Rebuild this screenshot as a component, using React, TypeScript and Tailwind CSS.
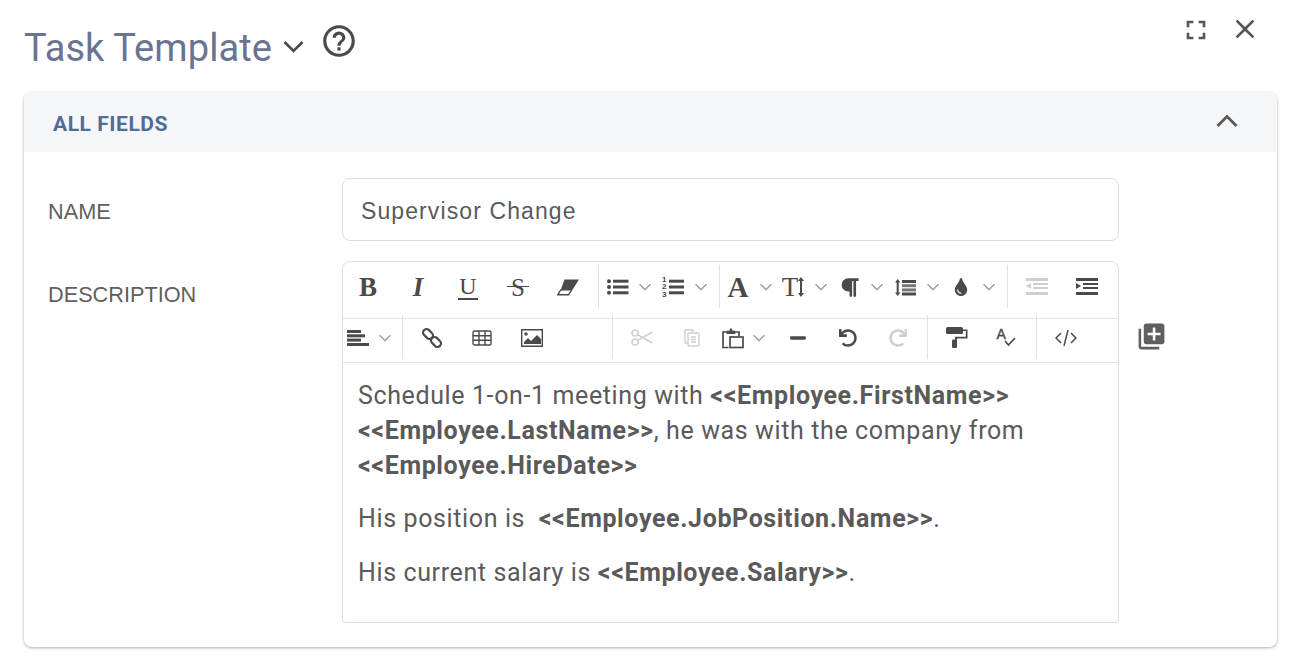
import type { ReactNode } from 'react'
import { FaUndo, FaRedo, FaTint, FaParagraph, FaMinus } from 'react-icons/fa'
import { MdClose, MdFullscreen, MdHelpOutline, MdLibraryAdd } from 'react-icons/md'

const Chevron = () => (
  <svg width="14" height="8" viewBox="0 0 14 8" fill="none" stroke="#a3a3a3" strokeWidth="1.5">
    <path d="M1.5 1.2 7 6.6l5.5-5.4" />
  </svg>
)

const Btn = ({ children, off }: { children: ReactNode; off?: boolean }) => (
  <div className={`flex h-full w-[50px] shrink-0 items-center justify-center ${off ? 'text-[#cfcfcf]' : 'text-[#4a4a4a]'}`}>
    {children}
  </div>
)

const Drop = ({ children, narrow }: { children: ReactNode; narrow?: boolean }) => (
  <div className={`flex h-full shrink-0 items-center text-[#4a4a4a] ${narrow ? 'w-[55px]' : 'w-[56px]'}`}>
    <div className="flex w-[28px] justify-center">{children}</div>
    <div className="ml-[7px]">
      <Chevron />
    </div>
  </div>
)

const Sep = ({ tall, first }: { tall?: boolean; first?: boolean }) => (
  <div
    className={`mr-[4px] w-px shrink-0 bg-[#e0e0e0] ${first ? 'ml-[5px]' : 'ml-[4px]'} ${tall ? '-mt-[4px] h-[44px]' : 'mt-[3px] h-[43px]'}`}
  />
)

const Glyph = ({ children, className }: { children: ReactNode; className?: string }) => (
  <span className={`font-['Liberation_Serif',serif] leading-none ${className ?? ''}`}>{children}</span>
)

const Eraser = () => (
  <svg width="22" height="17" viewBox="0 0 22 17" fill="currentColor">
    <path d="M7.5 0.5H22L15 11.5H3.5z" />
    <path d="M4 10.5 0.8 15.8h10.7l3.2-5" fill="none" stroke="currentColor" strokeWidth="1.4" />
  </svg>
)

const ListUl = () => (
  <svg className="ml-[2px]" width="22" height="18" viewBox="0 0 22 18" fill="currentColor">
    <circle cx="2" cy="3.2" r="2" />
    <circle cx="2" cy="9" r="2" />
    <circle cx="2" cy="14.8" r="2" />
    <rect x="6" y="1.7" width="15.5" height="3" />
    <rect x="6" y="7.5" width="15.5" height="3" />
    <rect x="6" y="13.3" width="15.5" height="3" />
  </svg>
)

const ListOl = () => (
  <div className="relative h-[18px] w-[22px]">
    <svg className="absolute inset-0" width="22" height="18" viewBox="0 0 22 18" fill="currentColor">
      <rect x="7" y="1.7" width="15" height="3" />
      <rect x="7" y="7.5" width="15" height="3" />
      <rect x="7" y="13.3" width="15" height="3" />
    </svg>
    <div className="absolute left-0 top-[-2px] w-[6px] font-['Liberation_Sans',sans-serif] text-[8px] font-bold leading-[7.4px]">
      1<br />2<br />3
    </div>
  </div>
)

const LineHeight = () => (
  <svg width="21" height="17" viewBox="0 0 21 17" fill="currentColor">
    <path d="M2.7 0l2.7 3.5H3.7v10h1.7L2.7 17 0 13.500h1.700v-10H0z" />
    <rect x="7" y="1" width="14" height="3" />
    <rect x="7" y="5.200" width="14" height="3" opacity=".75" />
    <rect x="7" y="9.400" width="14" height="3" opacity=".75" />
    <rect x="7" y="13.500" width="14" height="3" />
  </svg>
)

const Outdent = () => (
  <svg width="22" height="18" viewBox="0 0 22 18" fill="currentColor">
    <rect x="0" y="0" width="22" height="3" />
    <rect x="7" y="5" width="15" height="2" />
    <rect x="7" y="9" width="15" height="2" />
    <path d="M5 5v6L0 8z" />
    <rect x="0" y="14" width="22" height="3" />
  </svg>
)

const Indent = () => (
  <svg width="22" height="18" viewBox="0 0 22 18" fill="currentColor">
    <rect x="0" y="0" width="22" height="3" />
    <rect x="7" y="5" width="15" height="2" />
    <rect x="7" y="9" width="15" height="2" />
    <path d="M0 5v6l5-3z" />
    <rect x="0" y="14" width="22" height="3" />
  </svg>
)

const AlignLeft = () => (
  <svg className="ml-[2px]" width="22" height="18" viewBox="0 0 22 18" fill="currentColor">
    <rect x="0" y="1" width="14" height="3" />
    <rect x="0" y="5.300" width="18" height="3" />
    <rect x="0" y="9.600" width="14" height="3" />
    <rect x="0" y="14" width="22" height="3" />
  </svg>
)

const LinkIcon = () => (
  <svg width="20" height="20" viewBox="0 0 20 20" fill="none" stroke="currentColor" strokeWidth="2.2">
    <rect x="0.500" y="2.500" width="11" height="7" rx="3.500" transform="rotate(45 6 6)" />
    <rect x="8.500" y="10.500" width="11" height="7" rx="3.500" transform="rotate(45 14 14)" />
  </svg>
)

const TableIcon = () => (
  <svg width="20" height="16" viewBox="0 0 20 16" fill="none" stroke="currentColor" strokeWidth="1.4">
    <rect x="1" y="1" width="18" height="14" rx="1.500" />
    <path d="M1 5.700h18M1 10.300h18M7 1v14M13 1v14" />
  </svg>
)

const ImageIcon = () => (
  <svg width="22" height="18" viewBox="0 0 22 18" fill="currentColor">
    <path d="M0 0h22v18H0zM1.400 1.400v15.200h19.200V1.400z" fillRule="evenodd" />
    <circle cx="5" cy="5" r="1.800" />
    <path d="M3 15v-2l4-4 3 3 6-6 4 4v5z" />
  </svg>
)

const Scissors = () => (
  <svg width="22" height="17" viewBox="0 0 22 17" fill="none" stroke="currentColor" strokeWidth="1.500">
    <circle cx="4" cy="4" r="3" />
    <circle cx="4" cy="13" r="3" />
    <path d="M6.500 5.700 21.500 14M6.500 11.300 21.500 3" />
  </svg>
)

const CopyIcon = () => (
  <svg width="16" height="18" viewBox="0 0 16 18" fill="none" stroke="currentColor" strokeWidth="1.400">
    <path d="M3 14H1V1h8v2" />
    <rect x="4" y="4" width="11" height="13" rx="1" />
    <path d="M7 8h5M7 10.500h5M7 13h5" />
  </svg>
)

const Paste = () => (
  <svg className="ml-[3px]" width="22" height="22" viewBox="0 0 22 22" fill="none" stroke="currentColor" strokeWidth="1.700">
    <path d="M6.500 20.500H1V5h4M13 5h4v4" />
    <path d="M5 6.500V4.200h2.500L9 1.500l1.500 2.700H13v2.300z" fill="currentColor" strokeWidth="1" />
    <rect x="8" y="10" width="13" height="10.500" />
  </svg>
)

const PaintRoller = () => (
  <svg width="22" height="21" viewBox="0 0 22 21" fill="currentColor">
    <rect x="0" y="0" width="17" height="7" rx="1.500" />
    <path d="M17 2.500h4.500v9H11v2H9v-3.700h10.800V4H17z" />
    <rect x="6" y="12.500" width="5" height="8.500" rx="1" />
  </svg>
)

const SpellCheck = () => (
  <div className="relative ml-[-2px] h-[20px] w-[19px]">
    <span className="absolute left-0 top-[-3px] font-['Liberation_Sans',sans-serif] text-[14px] leading-[18px] [-webkit-text-stroke:0.4px_currentColor]">A</span>
    <svg className="absolute inset-0" width="19" height="20" viewBox="0 0 19 20" fill="none" stroke="currentColor" strokeWidth="1.700">
      <path d="M8 13l3.500 4 6.500-7" />
    </svg>
  </div>
)

const Toolbar = () => (
  <div className="text-[#4a4a4a]">
    <div className="flex h-[57px] border-b border-[#e3e3e3] pb-[6px]">
      <Btn><Glyph className="text-[27px] font-bold">B</Glyph></Btn>
      <Btn><Glyph className="text-[27px] font-bold italic">I</Glyph></Btn>
      <Btn>
        <span className="border-b-2 border-[#4a4a4a] px-px"><Glyph className="block text-[24px]">U</Glyph></span>
      </Btn>
      <Btn>
        <span className="relative">
          <Glyph className="block text-[25px]">S</Glyph>
          <span className="absolute -left-[4px] -right-[4px] top-[11px] h-[1.500px] bg-[#4a4a4a]" />
        </span>
      </Btn>
      <Btn><Eraser /></Btn>
      <Sep first />
      <Drop><ListUl /></Drop>
      <Drop><ListOl /></Drop>
      <Sep />
      <Drop narrow><Glyph className="text-[29px] font-bold">A</Glyph></Drop>
      <Drop>
        <span className="flex items-center">
          <Glyph className="text-[27px]">T</Glyph>
          <svg width="6" height="20" viewBox="0 0 6 20" fill="currentColor"><path d="M3 0l3 4H4v12h2l-3 4-3-4h2V4H0z" /></svg>
        </span>
      </Drop>
      <Drop><FaParagraph size={21} /></Drop>
      <Drop><LineHeight /></Drop>
      <Drop><FaTint size={18} /></Drop>
      <Sep />
      <Btn off><Outdent /></Btn>
      <Btn><Indent /></Btn>
    </div>
    <div className="flex h-[44px] border-b border-[#e3e3e3] pb-[6px]">
      <Drop narrow><AlignLeft /></Drop>
      <Sep tall />
      <Btn><LinkIcon /></Btn>
      <Btn><TableIcon /></Btn>
      <Btn><ImageIcon /></Btn>
      <div className="w-[51px] shrink-0" />
      <Sep tall />
      <Btn off><Scissors /></Btn>
      <Btn off><CopyIcon /></Btn>
      <Drop><Paste /></Drop>
      <Btn><FaMinus size={18} /></Btn>
      <Btn><FaUndo size={18} /></Btn>
      <Btn off><FaRedo size={18} /></Btn>
      <Sep tall />
      <Btn><PaintRoller /></Btn>
      <Btn><SpellCheck /></Btn>
      <Sep tall />
      <Btn>
        <svg width="22" height="16" viewBox="0 0 22 16" fill="none" stroke="currentColor" strokeWidth="1.500">
          <path d="M6 3 1 8l5 5M16 3l5 5-5 5M13 0 9 16" />
        </svg>
      </Btn>
    </div>
  </div>
)

const Tag = ({ children }: { children: ReactNode }) => <strong className="font-bold">{children}</strong>

export default function App() {
  return (
    <div className="h-[671px] w-[1300px] overflow-hidden bg-white font-['Roboto',sans-serif]">
      <div className="flex h-[92px] items-start pl-[24px]">
        <h1 className="mt-[25px] text-[38px] font-normal leading-[46px] tracking-[0.08px] text-[#6a7492]">Task Template</h1>
        <svg className="ml-[11px] mt-[40px] text-[#4a4a4a]" width="21" height="13" viewBox="0 0 21 13" fill="none" stroke="currentColor" strokeWidth="2.600">
          <path d="M1.500 2 10.500 11l9-9" />
        </svg>
        <MdHelpOutline size={38} className="ml-[16px] mt-[22px] text-[#4a4a4a]" />
        <MdFullscreen size={32} className="ml-auto mt-[14px] text-[#555]" />
        <MdClose size={32} className="ml-[17px] mr-[39px] mt-[13px] text-[#555]" />
      </div>
      <div className="ml-[24px] h-[555px] w-[1253px] overflow-hidden rounded-[8px] bg-white shadow-[0_1px_3px_rgba(0,0,0,0.32)]">
        <div className="flex h-[60px] items-center justify-between bg-[#f5f6f8] pl-[29px] pr-[39px]">
          <span className="mt-[5px] text-[21px] font-bold leading-none tracking-[0.55px] text-[#4f6d96]">ALL FIELDS</span>
          <svg className="-mt-[2px] text-[#5a5a5a]" width="22" height="14" viewBox="0 0 22 14" fill="none" stroke="currentColor" strokeWidth="2.800">
            <path d="M1.500 12 11 2.500l9.500 9.500" />
          </svg>
        </div>
        <div className="grid grid-cols-[318px_777px_auto] pt-[26px] text-[#5a5a5a]">
          <div className="pl-[24px] pt-[21px] font-['Liberation_Sans',sans-serif] text-[21.700px] leading-[26px] text-[#5f5f5f]">NAME</div>
          <div className="flex h-[63px] items-center rounded-[8px] border border-[#dcdcdc] px-[18px] pt-[3px] font-['Liberation_Sans',sans-serif] text-[23px] tracking-[1.100px]">
            Supervisor Change
          </div>
          <div />
          <div className="mt-[20px] pl-[24px] pt-[21px] font-['Liberation_Sans',sans-serif] text-[21.700px] leading-[26px] text-[#5f5f5f]">DESCRIPTION</div>
          <div className="mt-[20px] h-[362px] rounded-b-[3px] rounded-t-[8px] border border-[#e0e0e0]">
            <Toolbar />
            <div className="px-[15px] pt-[15px] text-[25px] leading-[35px] tracking-[0.62px]">
              <p>
                Schedule 1-on-1 meeting with <Tag>&lt;&lt;Employee.FirstName&gt;&gt;</Tag> <Tag>&lt;&lt;Employee.LastName&gt;&gt;</Tag>, he was with the company from <Tag>&lt;&lt;Employee.HireDate&gt;&gt;</Tag>
              </p>
              <p className="mt-[18px]">
                His position is&nbsp; <Tag>&lt;&lt;Employee.JobPosition.Name&gt;&gt;</Tag>.
              </p>
              <p className="mt-[19px]">
                His current salary is <Tag>&lt;&lt;Employee.Salary&gt;&gt;</Tag>.
              </p>
            </div>
          </div>
          <div className="mt-[80px] pl-[17px]">
            <MdLibraryAdd size={31} className="text-[#5f5f5f]" />
          </div>
        </div>
      </div>
    </div>
  )
}
